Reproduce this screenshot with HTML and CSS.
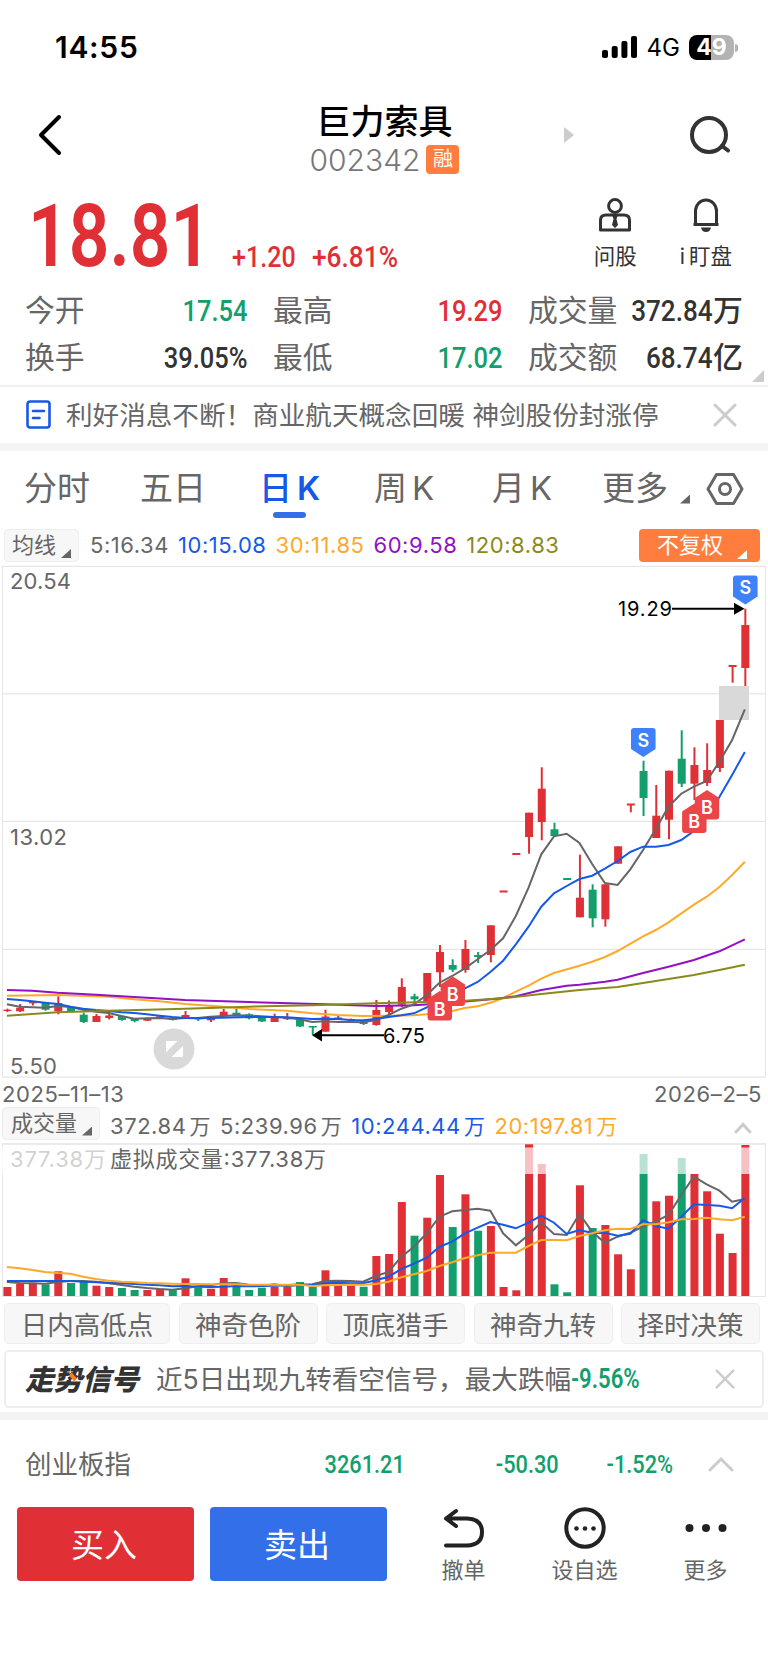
FILE: index.html
```html
<!DOCTYPE html>
<html lang="zh-CN">
<head>
  <meta charset="UTF-8">
  <meta name="viewport" content="width=device-width, initial-scale=1.0">
  <title>巨力索具 002342</title>
  <link rel="stylesheet" href="styles.css">
</head>
<body>
  <div class="status-bar">
    <span class="time">14:55</span>
    <div class="status-icons">
      <svg width="36" height="22" viewBox="0 0 36 22">
        <rect x="0" y="14" width="6" height="8" rx="2"/>
        <rect x="9.7" y="10" width="6" height="12" rx="2"/>
        <rect x="19.4" y="5" width="6" height="17" rx="2"/>
        <rect x="29" y="0" width="6" height="22" rx="2"/>
      </svg>
      <span class="network">4G</span>
      <div class="battery">49</div>
    </div>
  </div>

  <header class="header">
    <svg class="back" width="24" height="42" viewBox="0 0 24 42"><path d="M21 3 L3 21 L21 39"/></svg>
    <div class="stock">
      <h1>巨力索具</h1>
      <div class="code"><span>002342</span><b>融</b></div>
    </div>
    <svg class="next" width="10" height="16" viewBox="0 0 10 16"><path d="M0 0 L10 8 L0 16 Z"/></svg>
    <svg class="search" width="44" height="40" viewBox="0 0 44 40"><circle cx="20" cy="20" r="17"/><path d="M33 31 L39 35.5"/></svg>
  </header>

  <section class="quote">
    <div class="price"><span class="din">18.81</span></div>
    <div class="change"><span class="din">+1.20</span></div>
    <div class="change percent"><span class="din">+6.81%</span></div>
    <div class="tools">
      <div class="tool">
        <svg width="34" height="36" viewBox="0 0 34 36">
          <circle cx="17" cy="9" r="6.4"/>
          <path d="M2.500 33 V23 Q2.500 18 8 18 H26 Q31.500 18 31.500 23 V33 Z"/>
          <path class="solid" d="M14.500 19 H19.500 L18.500 22 L20 28 L17 31 L14 28 L15.500 22 Z"/>
        </svg>
        <span>问股</span>
      </div>
      <div class="tool">
        <svg width="34" height="36" viewBox="0 0 34 36">
          <path d="M6.500 27 V14 A10.500 11 0 0 1 27.500 14 V27"/>
          <path d="M4.500 27.500 H29.500"/>
          <path class="solid" d="M12 30.500 H22 Q21 35 17 35 Q13 35 12 30.500 Z"/>
        </svg>
        <span><i>i</i>盯盘</span>
      </div>
    </div>
  </section>

  <section class="stats">
    <div class="stat"><span>今开</span><b class="din green">17.54</b></div>
    <div class="stat"><span>最高</span><b class="din red">19.29</b></div>
    <div class="stat"><span>成交量</span><b><i class="din">372.84</i>万</b></div>
    <div class="stat"><span>换手</span><b class="din">39.05%</b></div>
    <div class="stat"><span>最低</span><b class="din green">17.02</b></div>
    <div class="stat"><span>成交额</span><b><i class="din">68.74</i>亿</b></div>
    <i class="corner"></i>
  </section>

  <section class="news">
    <svg width="26" height="30" viewBox="0 0 26 30"><rect x="1.500" y="1.500" width="22" height="26" rx="2.500"/><path d="M7 11 H18 M7 18 H13.500"/></svg>
    <p>利好消息不断！商业航天概念回暖 神剑股份封涨停</p>
    <svg class="close" width="24" height="24" viewBox="0 0 24 24"><path d="M2 2 L22 22 M22 2 L2 22"/></svg>
  </section>

  <nav class="tabs">
    <a>分时</a>
    <a>五日</a>
    <a class="active">日<em>K</em></a>
    <a>周<em>K</em></a>
    <a>月<em>K</em></a>
    <a>更多<i class="corner"></i></a>
    <svg width="38" height="34" viewBox="0 0 38 34"><path d="M10.500 2.500 H27.500 L36 17 L27.500 31.500 H10.500 L2 17 Z"/><circle cx="19" cy="17" r="5.500"/></svg>
  </nav>

  <section class="legend">
    <button class="picker">均线<i class="corner"></i></button>
    <span class="c5">5:16.34</span>
    <span class="c10">10:15.08</span>
    <span class="c30">30:11.85</span>
    <span class="c60">60:9.58</span>
    <span class="c120">120:8.83</span>
    <button class="adjust">不复权<i class="corner"></i></button>
  </section>

  <svg id="price-chart" width="768" height="513" viewBox="0 565 768 513"></svg>

  <div class="dates"><span>2025–11–13</span><span>2026–2–5</span></div>

  <section class="legend volume">
    <button class="picker">成交量<i class="corner"></i></button>
    <span class="c5">372.84<small>万</small></span>
    <span class="c5">5:239.96<small>万</small></span>
    <span class="c10">10:244.44<small>万</small></span>
    <span class="c30">20:197.81<small>万</small></span>
    <svg class="fold" width="18" height="12" viewBox="0 0 18 12"><path d="M2 10 L9 2.500 L16 10"/></svg>
  </section>

  <svg id="volume-chart" width="768" height="155" viewBox="0 1143 768 155"></svg>

  <section class="tags">
    <button>日内高低点</button>
    <button>神奇色阶</button>
    <button>顶底猎手</button>
    <button>神奇九转</button>
    <button>择时决策</button>
  </section>

  <section class="signal">
    <strong>走势信号</strong>
    <p>近5日出现九转看空信号，最大跌幅</p><b class="din green">-9.56%</b>
    <svg class="close" width="20" height="20" viewBox="0 0 24 24"><path d="M2 2 L22 22 M22 2 L2 22"/></svg>
  </section>

  <section class="index">
    <span>创业板指</span>
    <b class="din">3261.21</b>
    <b class="din">-50.30</b>
    <b class="din">-1.52%</b>
    <svg class="fold" width="26" height="16" viewBox="0 0 26 16"><path d="M2 14 L13 3 L24 14"/></svg>
  </section>

  <footer class="actions">
    <button class="buy">买入</button>
    <button class="sell">卖出</button>
    <div class="action">
      <svg width="44" height="42" viewBox="0 0 44 42"><path d="M14 4 L4 11.500 L14 19 M5 11.500 H25 Q40 12 40 25 Q40 38 25 38.500 H4"/></svg>
      <span>撤单</span>
    </div>
    <div class="action">
      <svg width="44" height="42" viewBox="0 0 44 42"><circle cx="22" cy="21" r="18.700"/><g class="dots"><circle cx="13.500" cy="21.500" r="2.300"/><circle cx="22" cy="21.500" r="2.300"/><circle cx="30.500" cy="21.500" r="2.300"/></g></svg>
      <span>设自选</span>
    </div>
    <div class="action">
      <svg width="44" height="42" viewBox="0 0 44 42"><g class="dots"><circle cx="5.500" cy="21" r="4"/><circle cx="22" cy="21" r="4"/><circle cx="38.500" cy="21" r="4"/></g></svg>
      <span>更多</span>
    </div>
  </footer>

  <script src="chart.js"></script>
</body>
</html>
```
FILE: styles.css
```css
* {
  box-sizing: border-box;
}

body {
  margin: 0;
  width: 768px;
  height: 1663px;
  overflow: hidden;
  background: #fff;
  color: #333;
  font-family: Inter, "Noto Sans CJK SC", sans-serif;
}

h1, p {
  margin: 0;
  font-weight: 400;
}

svg {
  display: block;
  flex: none;
}

button {
  flex: none;
  border: none;
  padding: 0;
  font-family: inherit;
}

i, em {
  font-style: normal;
}

/* narrow digits */
.din {
  display: inline-block;
  font-family: Roboto, "Noto Sans CJK SC", sans-serif;
  font-weight: 500;
  transform: scaleX(0.85);
  transform-origin: right center;
}

.green {
  color: #129f6c;
}

.red {
  color: #e03036;
}

.corner {
  width: 10px;
  height: 9px;
  background: currentColor;
  clip-path: polygon(100% 0, 100% 100%, 0 100%);
}

.status-bar {
  height: 94px;
  padding: 0 34px 0 55px;
  display: flex;
  align-items: center;
  justify-content: space-between;
  color: #000;
}

.time {
  font-size: 30px;
  font-weight: 600;
  letter-spacing: 0.7px;
}

.status-icons {
  display: flex;
  align-items: center;
}

.network {
  margin: 0 9px;
  font-size: 24px;
}

.battery {
  position: relative;
  width: 45px;
  height: 25px;
  border-radius: 8px;
  background: linear-gradient(to right, #000 49%, #b3b3b3 49%);
  color: #fff;
  font-size: 23px;
  font-weight: 700;
  line-height: 25px;
  text-align: center;
}

.battery::after {
  content: "";
  position: absolute;
  right: -4px;
  top: 9px;
  width: 3px;
  height: 8px;
  border-radius: 0 3px 3px 0;
  background: #b3b3b3;
}

.header {
  height: 90px;
  padding: 0 35px 0 38px;
  display: grid;
  grid-template-columns: 200px 293px 50px 1fr;
  align-items: center;
}

.back, .search {
  fill: none;
  stroke: #000;
  stroke-width: 4;
  stroke-linecap: round;
  stroke-linejoin: round;
  margin-top: -9px;
}

.search {
  justify-self: end;
  stroke: #333;
}

.next {
  fill: #ccc;
  margin: -8px 0 0 33px;
}

.stock {
  padding-top: 1px;
  text-align: center;
}

.stock h1 {
  color: #000;
  font-size: 34px;
  font-weight: 500;
  line-height: 40px;
}

.code {
  display: flex;
  justify-content: center;
  align-items: center;
  gap: 6px;
  height: 36px;
  color: #777;
  font-size: 30px;
  font-weight: 300;
}

.code b {
  width: 33px;
  height: 29px;
  border-radius: 4px;
  background: #ff7e3f;
  color: #fff;
  font-size: 20px;
  font-weight: 400;
  line-height: 29px;
}

.quote {
  height: 102px;
  padding: 0 36px 0 28px;
  display: flex;
  color: #e03036;
}

.quote .din {
  transform-origin: left center;
}

.price {
  width: 204px;
  font-size: 88px;
  line-height: 101px;
}

.price .din {
  font-weight: 600;
  transform: scaleX(0.81);
}

.change {
  width: 80px;
  font-size: 29.5px;
  line-height: 145px;
}

.percent .din {
  transform: scaleX(0.89);
}

.tools {
  margin-left: auto;
  display: flex;
  gap: 43px;
  color: #333;
}

.tool {
  padding-top: 13px;
  display: flex;
  flex-direction: column;
  align-items: center;
  font-size: 21.5px;
}

.tool svg {
  fill: none;
  stroke: #333;
  stroke-width: 3;
  stroke-linejoin: round;
}

.tool .solid {
  fill: #333;
  stroke: none;
}

.tool span {
  margin-top: 8px;
  line-height: 30px;
}

.tool i {
  margin-right: 4px;
}

.stats {
  position: relative;
  height: 101px;
  padding: 0 25px;
  display: grid;
  grid-template-columns: 223px 230px 215px;
  grid-auto-rows: 47px;
  column-gap: 25px;
  border-bottom: 2px solid #f1f1f1;
}

.stat {
  display: flex;
  justify-content: space-between;
  align-items: center;
  font-size: 29.8px;
  line-height: 45px;
  white-space: nowrap;
}

.stat > span {
  padding-top: 2px;
  color: #666;
}

.stat b {
  padding-top: 1px;
  font-size: 30px;
  font-weight: 500;
}

.stat i.din {
  transform: scaleX(0.87);
}

.stats .corner {
  position: absolute;
  right: 4px;
  bottom: 3px;
  width: 12px;
  height: 12px;
  background: #ccc;
}

.news {
  height: 64px;
  padding: 0 31px 0 26px;
  display: flex;
  align-items: center;
  border-bottom: 8px solid #f4f4f4;
  color: #666;
  font-size: 26.6px;
}

.news p, .signal p, .signal strong {
  margin-top: -4px;
}

.news > svg:first-child {
  margin-right: 14px;
  fill: none;
  stroke: #1659e8;
  stroke-width: 2.6;
  stroke-linecap: round;
}

.close, .fold {
  margin-left: auto;
  fill: none;
  stroke: #ccc;
  stroke-width: 3;
  stroke-linecap: round;
}

.tabs {
  height: 75px;
  padding: 0 25px 0 24px;
  display: grid;
  grid-template-columns: 116px 119px 115px 118px 110px 105px 1fr;
  align-items: center;
  color: #666;
  font-size: 33px;
}

.tabs a {
  position: relative;
  margin-top: -6px;
  white-space: nowrap;
}

.tabs em {
  margin-left: 5px;
}

.tabs .active {
  color: #1659e8;
  font-weight: 500;
}

.tabs .active em {
  font-weight: 600;
}

.tabs .active::after {
  content: "";
  position: absolute;
  left: 14px;
  bottom: -8px;
  width: 33px;
  height: 6px;
  border-radius: 3px;
  background: #326fe8;
}

.tabs .corner {
  position: relative;
  top: 4px;
  display: inline-block;
  margin-left: 12px;
}

.tabs svg {
  margin-left: -1px;
  fill: none;
  stroke: #666;
  stroke-width: 3;
  stroke-linejoin: round;
}

.legend {
  height: 39px;
  padding: 3px 8px 3px 4px;
  display: flex;
  align-items: center;
  gap: 9px;
  font-size: 22px;
}

.legend span {
  padding-bottom: 2px;
  letter-spacing: 0.55px;
}

.legend button {
  position: relative;
  height: 33px;
  border-radius: 4px;
  font-size: 22px;
  line-height: 29px;
  text-align: left;
}

.picker {
  width: 75px;
  margin-right: 2px;
  padding-left: 7px;
  border: 1px solid #eee;
  background: #f7f7f7;
  color: #666;
}

.adjust {
  width: 121px;
  margin-left: auto;
  padding-left: 18px;
  background: #ff7e3f;
  color: #fff;
}

.legend .corner {
  position: absolute;
  right: 7px;
  bottom: 3px;
}

.legend .adjust .corner {
  right: 13px;
}

.c5 { color: #666; }
.c10 { color: #1659e8; }
.c30 { color: #fea928; }
.c60 { color: #9210c8; }
.c120 { color: #8a8a1c; }

#price-chart text, #volume-chart text {
  font-size: 22px;
  fill: #666;
}

.dates {
  height: 29px;
  padding: 3px 6px 0 2px;
  display: flex;
  justify-content: space-between;
  color: #666;
  font-size: 22px;
  letter-spacing: 0.6px;
  line-height: 27px;
}

.volume {
  height: 36px;
  padding: 0 16px 4px 2px;
}

.volume .picker {
  width: 98px;
  margin-right: 1px;
  padding-left: 8px;
}

.volume span {
  padding: 3px 0 0;
  white-space: nowrap;
}

.volume small {
  margin-left: 3px;
  font-size: 21px;
}

.volume .fold {
  margin-top: 9px;
}

.tags {
  height: 52px;
  padding: 5px 8px 6px 4px;
  display: flex;
  justify-content: space-between;
}

.tags button {
  width: 139px;
  padding-bottom: 3px;
  border: 1px solid #eee;
  border-radius: 5px;
  background: #f7f7f7;
  color: #666;
  font-size: 26.5px;
}

.tags button:first-child {
  width: 166px;
}

.signal {
  height: 58px;
  margin: 0 4px 4px;
  padding: 0 27px 0 19px;
  display: flex;
  align-items: center;
  border: 2px solid #eee;
  border-radius: 5px;
  color: #666;
  font-size: 26.6px;
  white-space: nowrap;
}

.signal strong {
  position: relative;
  width: 131px;
  color: #333;
  font-size: 28.5px;
  font-style: italic;
  font-weight: 900;
}

/* orange spark on the logo */
.signal strong::after {
  content: "";
  position: absolute;
  left: 46px;
  top: 16px;
  width: 4px;
  height: 8px;
  background: #ff7e1f;
  transform: rotate(-40deg);
}

.signal .din {
  font-size: 27px;
  font-weight: 600;
  transform: scaleX(0.82);
  transform-origin: left center;
}

.index {
  height: 95px;
  padding: 0 34px 0 25px;
  border-top: 8px solid #f4f4f4;
  display: grid;
  grid-template-columns: 200px 180px 154px 114px 1fr;
  align-items: center;
  color: #666;
  font-size: 26.5px;
}

.index span {
  margin-top: -2px;
}

.index .din {
  justify-self: end;
  color: #129f6c;
  font-size: 26.5px;
  transform: scaleX(0.82);
}

.actions {
  padding: 0 0 0 17px;
  display: flex;
}

.actions button {
  width: 177px;
  height: 74px;
  margin-right: 16px;
  padding: 0 3px 2px 0;
  border-radius: 4px;
  color: #fff;
  font-size: 33px;
}

.buy {
  background: #e03036;
}

.sell {
  background: #326fe8;
}

.action {
  width: 121px;
  display: flex;
  flex-direction: column;
  align-items: center;
  color: #666;
  font-size: 22px;
}

.action svg {
  fill: none;
  stroke: #222;
  stroke-width: 4;
  stroke-linecap: round;
  stroke-linejoin: round;
}

.action .dots {
  fill: #222;
  stroke: none;
}

.action span {
  margin-top: 5px;
  line-height: 32px;
}
```
FILE: chart.js
```js
const RED = '#e03036';
const GREEN = '#129f6c';
const STEP = 12.723;
const x = i => 7.4 + STEP * i;

// [color, high, body top, body bottom, low]
const candles = [
  ['r', 1008.7, 1009.7, 1011, 1012], ['r', 1004, 1007.7, 1011.3, 1012], ['r', 1001, 1001.7, 1003.3, 1005.5],
  ['g', 1003, 1003, 1009.7, 1010.7], ['r', 996.3, 1003, 1011.3, 1014.3], ['g', 1007, 1007, 1011.7, 1011.7],
  ['g', 1012.7, 1014.7, 1022, 1023], ['r', 1014, 1016, 1022, 1022], ['r', 1012, 1015.5, 1018, 1019.5],
  ['g', 1016, 1016, 1020, 1020.7], ['g', 1019, 1019, 1021, 1022.3], ['r', 1018, 1018.3, 1020.7, 1021],
  ['r', 1016, 1016.3, 1018.7, 1018.7], ['g', 1018.5, 1018.5, 1020, 1020.5], ['r', 1011, 1015, 1018, 1018],
  ['g', 1018.3, 1018.3, 1019.3, 1021], ['r', 1018, 1018, 1020.3, 1022], ['r', 1009, 1011.7, 1016, 1016],
  ['g', 1008.7, 1012.7, 1016, 1016], ['g', 1013.3, 1014.3, 1018.3, 1019.3], ['g', 1017.3, 1017.3, 1021.5, 1022],
  ['r', 1013.7, 1018, 1022, 1022], ['r', 1013, 1017, 1019.3, 1020], ['g', 1019.3, 1019.3, 1026.5, 1027],
  ['g', 1026, 1026, 1027.5, 1035], ['r', 1009.7, 1016.5, 1031.7, 1031.7], ['r', 1016, 1017.5, 1019.5, 1019.5],
  ['r', 1018.5, 1019, 1020.5, 1020.5], ['g', 1020.5, 1020.5, 1024, 1025], ['r', 1000, 1010, 1025, 1025.7],
  ['r', 1000.5, 1005.7, 1012, 1014], ['r', 978.3, 987, 1004.7, 1007], ['g', 993.7, 996.3, 999.3, 1004.5],
  ['r', 973, 973, 1001.7, 1001.7], ['r', 945, 952, 972.3, 987], ['g', 959.3, 965, 969.7, 972],
  ['r', 940, 949, 970, 972.7], ['g', 952, 955, 957, 963], ['r', 925.3, 925.3, 955, 962.3],
  ['r', 891, 890.5, 892.5, 892], ['r', 854, 853, 855, 854], ['r', 812.7, 812.7, 837, 853.7],
  ['r', 767.3, 788.7, 822, 840.3], ['g', 822.7, 829.3, 836, 836], ['g', 879, 878, 880, 879],
  ['r', 854.7, 897.7, 917.3, 917.3], ['g', 884.3, 889.7, 918.3, 927.3], ['r', 884.3, 884.3, 919.3, 926.7],
  ['r', 846.3, 846.3, 863.7, 863.7], ['r', 804, 803.5, 805.5, 812.3], ['g', 760.7, 771, 798, 816],
  ['r', 785, 815.7, 838, 838], ['r', 770.7, 770.7, 819.7, 839.3], ['g', 730.3, 758.7, 783.7, 787],
  ['r', 747.3, 765, 783.7, 800], ['r', 743.3, 770, 783, 786], ['r', 720, 720, 768, 772],
  ['r', 666, 665, 667, 682.7], ['r', 608.7, 625, 668, 686]
];

// points are [index, y]
const averages = [
  ['#fea928', [[0, 995.7], [4, 995], [8, 996.7], [10, 999.3], [12, 1001.3], [14, 1004], [17, 1006.7], [19, 1009],
    [22, 1010.7], [24, 1013.3], [26, 1015], [28, 1016], [30, 1015.7], [32, 1015.3], [34, 1013.3], [35, 1011], [36, 1008],
    [37, 1006.3], [38, 1002.7], [39, 998], [40, 991.7], [41, 985.7], [42, 978.7], [43, 973], [45, 965.7], [46, 961.7],
    [47, 957], [48, 951], [50, 936.3], [51, 930], [52, 922.3], [54, 904.7], [55, 896.7], [56, 887], [57, 875], [58, 861.7]]],
  ['#9210c8', [[0, 990], [2, 990.7], [4, 992.7], [7, 994.7], [10, 997], [14, 1000], [19, 1002], [25, 1004.3], [29, 1006],
    [32, 1005.3], [35, 1002.7], [38, 999.3], [39, 998], [40, 996.3], [42, 990], [44, 985.7], [45, 984.7], [47, 981.7],
    [48, 979.7], [50, 973], [52, 966.7], [54, 960], [56, 951.3], [58, 939.3]]],
  ['#666', [[0, 1004.3], [1, 1006.7], [2, 1007.3], [3, 1007.7], [4, 1006], [5, 1007], [6, 1009.7], [7, 1011.7], [8, 1013],
    [9, 1016], [10, 1018.7], [11, 1018.3], [12, 1018], [13, 1019], [14, 1018], [15, 1018], [16, 1016.7], [17, 1016],
    [18, 1015.3], [19, 1015.5], [20, 1016.3], [21, 1017], [22, 1017.7], [23, 1019.3], [24, 1022], [25, 1021.3], [26, 1022],
    [27, 1022], [28, 1022.3], [29, 1020], [30, 1015], [31, 1008.7], [32, 1004.3], [33, 995], [34, 982.7], [35, 976],
    [36, 968.3], [37, 959.3], [38, 950], [39, 938.3], [40, 916], [41, 887.7], [42, 854.3], [43, 836.3], [44, 833.7],
    [45, 843], [46, 864], [47, 883], [48, 885], [49, 869.3], [50, 850], [51, 829], [52, 806.7], [53, 793.7], [54, 786.7],
    [55, 781], [56, 761.7], [57, 740], [58, 709.3]]],
  ['#1659e8', [[0, 999], [1, 1000], [2, 1001.3], [3, 1002.7], [4, 1004], [5, 1006.7], [6, 1008.7], [7, 1010], [8, 1011],
    [9, 1012.3], [10, 1013], [11, 1014.3], [12, 1015.7], [13, 1017], [14, 1018], [15, 1018.3], [16, 1018], [19, 1017],
    [21, 1017], [22, 1017.3], [24, 1019], [25, 1018.7], [26, 1019], [27, 1020], [28, 1020.3], [29, 1019], [30, 1017],
    [31, 1015.3], [32, 1013.3], [33, 1007.3], [34, 1000], [35, 994.7], [36, 988.3], [37, 982], [38, 972], [39, 960.7],
    [40, 944.3], [41, 926.7], [42, 906.7], [43, 893.3], [44, 886], [45, 879], [46, 875.7], [47, 868.7], [48, 861],
    [49, 852], [50, 846.7], [51, 846.7], [52, 845], [53, 840], [54, 831], [55, 817], [56, 797], [57, 775], [58, 752]]],
  ['#8a8a1c', [[0, 1015.7], [4, 1012.3], [8, 1010.7], [14, 1008.7], [19, 1006.7], [24, 1005.3], [29, 1003.3], [33, 1002],
    [36, 1000.7], [39, 998.3], [42, 994], [45, 990], [48, 987], [51, 981], [54, 975], [56, 970], [58, 964.7]]]
];

const volumeTops = [
  1287, 1283.7, 1282.7, 1284.3, 1271.3, 1283, 1282, 1285.7, 1287, 1288, 1290, 1290, 1288.7, 1290, 1278.3, 1287.7, 1288.7,
  1278, 1286.7, 1290, 1287.7, 1286.7, 1286.7, 1282, 1286.7, 1270.3, 1285.7, 1285.7, 1286.7, 1256, 1254, 1202, 1235.7,
  1217.7, 1175, 1227, 1194.3, 1230.7, 1226, 1287, 1290.3, 1144.3, 1164, 1284.3, 1292.3, 1185.3, 1228, 1225, 1254.3,
  1269.3, 1154, 1201.3, 1195.7, 1158, 1174, 1191.3, 1233.7, 1253, 1145
];

const volumeAverages = [
  ['#666', [1282, 1283, 1283.3, 1283.7, 1282, 1281, 1281, 1281.7, 1283.3, 1285, 1286.7, 1288, 1289, 1289.7, 1288.3, 1286.3,
    1285.3, 1283.3, 1283, 1284.7, 1286, 1284.3, 1286, 1285.3, 1284.3, 1281, 1280.7, 1281, 1281.7, 1276, 1272, 1256.7,
    1246.7, 1233.3, 1216.7, 1211.3, 1210, 1208.7, 1210.7, 1233.3, 1245.3, 1235, 1222.3, 1234, 1235, 1214, 1231.7, 1242.7,
    1236.7, 1232.7, 1226.7, 1221.3, 1215, 1195, 1176.7, 1184.3, 1190.7, 1201.7, 1199]],
  ['#1659e8', [1281, 1281, 1281, 1281, 1281, 1281, 1281.7, 1282.3, 1282.7, 1283.3, 1284, 1284.7, 1285.3, 1286.3, 1286,
    1286.7, 1287, 1286.7, 1286, 1286.3, 1286, 1285.7, 1285.3, 1284.3, 1285, 1283.3, 1282.7, 1283.3, 1283.3, 1280.3,
    1276.7, 1269, 1263.7, 1257.7, 1246.7, 1241.7, 1233.3, 1227.7, 1222, 1224.7, 1228.3, 1222.7, 1215.7, 1222.7, 1234,
    1230, 1233, 1232.7, 1235.7, 1233.7, 1220.3, 1226, 1228.7, 1216.7, 1204.3, 1205, 1205.7, 1208.3, 1198]],
  ['#fea928', [1267, 1268.3, 1270, 1272, 1273, 1273.7, 1276.7, 1279, 1280.7, 1281.7, 1282.3, 1283, 1283.3, 1283.7, 1284,
    1284, 1284.3, 1284.3, 1284.3, 1284.7, 1284.7, 1284.7, 1284.7, 1284.7, 1286, 1285.3, 1285, 1284.7, 1284.7, 1284,
    1281.7, 1277.3, 1274.3, 1271, 1266, 1262.3, 1258, 1255.3, 1252.7, 1252.7, 1252.7, 1246, 1240, 1240, 1240.3, 1236,
    1233.3, 1230.3, 1228.7, 1229, 1224.3, 1224.3, 1222.3, 1219.3, 1219, 1217.7, 1219.3, 1220.3, 1216.7]]
];

function rect(left, top, width, height, fill) {
  return `<rect x="${left}" y="${top}" width="${width}" height="${height}" fill="${fill}"/>`;
}

function line(points, color) {
  return `<polyline points="${points.map(p => x(p[0]) - 0.5 + ',' + p[1]).join(' ')}" fill="none" stroke="${color}" stroke-width="2"/>`;
}

function letter(cx, y, name) {
  return `<text x="${cx}" y="${y}" style="fill:#fff;font-size:18px;font-weight:600" text-anchor="middle">${name}</text>`;
}

function sell(cx, top) {
  return `<path d="M${cx - 12.3} ${top + 3}q0 -3 3 -3h18.600q3 0 3 3v18l-12.300 8l-12.300 -8z" fill="#3f80fb"/>` +
    letter(cx, top + 18.5, 'S');
}

function buy(cx, top) {
  return `<path d="M${cx} ${top}l12.200 8v18.500q0 3 -3 3h-18.400q-3 0 -3 -3v-18.500z" fill="#ea4549"/>`;
}

function drawPrice() {
  let out = '';
  [566.3, 693.7, 821.3, 949.3, 1077].forEach(y => out += rect(2, y - 0.5, 764, 1.2, '#e6e6e6'));
  out += rect(2, 566, 1, 511, '#e6e6e6') + rect(765, 566, 1, 511, '#e6e6e6');
  out += rect(719, 686, 30, 34, '#d9d9d9');
  candles.forEach(([c, high, top, bottom, low], i) => {
    const color = c === 'r' ? RED : GREEN;
    out += rect(x(i) - 1, high, 2, low - high, color) + rect(x(i) - 4, top, 8, bottom - top, color);
  });
  averages.forEach(([color, points]) => out += line(points, color));
  out += buy(439.8, 991) + buy(452.8, 976.5) + buy(694.3, 803.5) + buy(707, 790);
  out += letter(439.8, 1016, 'B') + letter(452.8, 1001, 'B') + letter(694.3, 828, 'B') + letter(707, 813.5, 'B');
  out += sell(643.3, 728) + sell(745.3, 575.5);
  out += '<path d="M672 608.700H736" stroke="#000" stroke-width="2"/><path d="M734 602.700L744.500 608.700L734 614.700Z"/>';
  out += '<path d="M320 1035.300H384" stroke="#000" stroke-width="2"/><path d="M322 1029L312 1035.300L322 1041.500Z"/>';
  out += '<text x="618" y="616" textLength="54" style="fill:#000;font-size:20px">19.29</text>';
  out += '<text x="383" y="1043" textLength="42" style="fill:#000;font-size:20px">6.75</text>';
  out += '<text x="10" y="589" textLength="61">20.54</text><text x="10" y="845" textLength="57">13.02</text><text x="10" y="1073.500" textLength="47">5.50</text>';
  out += '<circle cx="174" cy="1049" r="20.500" fill="#d9d9d9"/><path d="M167 1041H177.500L166 1052.500V1042Z M183 1046V1056Q183 1057 182 1057H171.500Z" fill="#fff"/>';
  document.getElementById('price-chart').innerHTML = out;
}

function drawVolume() {
  let out = rect(2, 1143.2, 764, 1.6, '#e6e6e6') + rect(2, 1296, 764, 1, '#e6e6e6');
  out += rect(2, 1143, 1, 154, '#e6e6e6') + rect(765, 1143, 1, 154, '#e6e6e6');
  volumeTops.forEach((top, i) => out += rect(x(i) - 4, top, 8, 1296 - top, candles[i][0] === 'r' ? RED : GREEN));
  volumeAverages.forEach(([color, ys]) => out += line(ys.map((y, i) => [i, y]), color));
  out += '<text x="10" y="1167" textLength="96">377.38万</text>';
  out += '<rect x="0" y="1147.500" width="764" height="26.500" fill="#fff" fill-opacity="0.7"/>';
  out += '<text x="110" y="1167" textLength="216">虚拟成交量:377.38万</text>';
  document.getElementById('volume-chart').innerHTML = out;
}

drawPrice();
drawVolume();
```
